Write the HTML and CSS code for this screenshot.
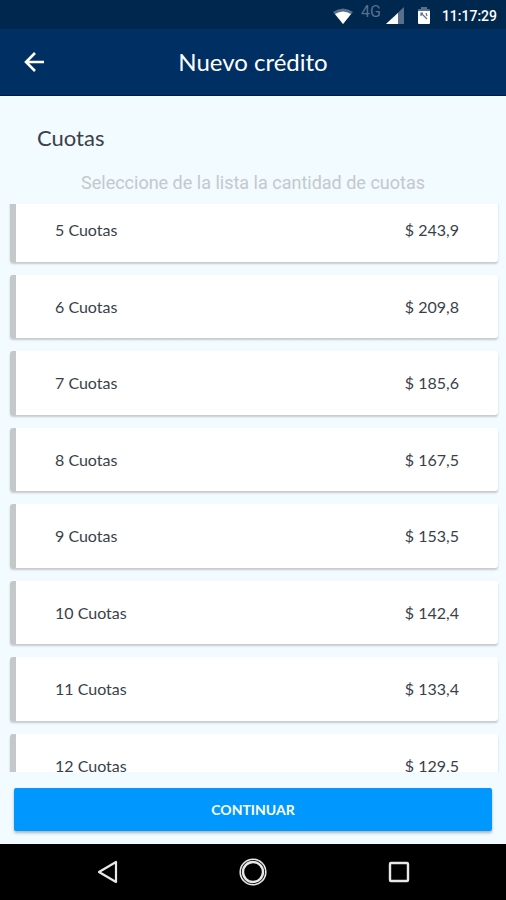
FILE: index.html
```html
<!doctype html>
<html lang="es">
    <head>
        <meta charset="utf-8" />
        <meta name="viewport" content="width=device-width" />
        <title>Nuevo crédito</title>
        <link rel="stylesheet" href="styles.css">
    </head>
    <body>
        <div class="status">
            <svg class="wifi" width="20" height="16" viewBox="0 0 20 16">
                <path d="M0 4Q10-3 20 4L10 16Z" fill="#58708c" />
                <path d="M2 6Q10 1 18 6L10 16Z" fill="#fff" />
            </svg>
            <span class="network">4G</span>
            <svg class="signal" width="18" height="17" viewBox="0 0 18 17">
                <path d="M18 0V17H0Z" fill="#58708c" />
                <path d="M12 6V17H0Z" fill="#fff" />
            </svg>
            <svg class="battery" width="12" height="17" viewBox="0 0 12 17">
                <path d="M0 5V3Q0 2 1 2H3V0H9V2H11Q12 2 12 3V5Z" fill="#58708c" />
                <path d="M0 4H12V16Q12 17 11 17H1Q0 17 0 16Z" fill="#fff" />
                <path d="M3 6L9 12M3 9V6H5M8 6L9 9" fill="none" stroke="#5b7390" stroke-width="1.2" />
            </svg>
            <span class="clock">11:17:29</span>
        </div>
        <header class="header">
            <button class="back" aria-label="Volver">
                <svg width="20" height="20" viewBox="0 0 20 20" fill="none" stroke="#fff" stroke-width="2.6">
                    <path d="M20 10H2M11 1L2 10L11 19" />
                </svg>
            </button>
            <h1>Nuevo crédito</h1>
        </header>
        <main class="main">
            <h2>Cuotas</h2>
            <p class="hint">Seleccione de la lista la cantidad de cuotas</p>
            <div class="list">
                <ul class="options">
                    <li><button class="option"><span>5 Cuotas</span><span>$ 243,9</span></button></li>
                    <li><button class="option"><span>6 Cuotas</span><span>$ 209,8</span></button></li>
                    <li><button class="option"><span>7 Cuotas</span><span>$ 185,6</span></button></li>
                    <li><button class="option"><span>8 Cuotas</span><span>$ 167,5</span></button></li>
                    <li><button class="option"><span>9 Cuotas</span><span>$ 153,5</span></button></li>
                    <li><button class="option"><span>10 Cuotas</span><span>$ 142,4</span></button></li>
                    <li><button class="option"><span>11 Cuotas</span><span>$ 133,4</span></button></li>
                    <li><button class="option"><span>12 Cuotas</span><span>$ 129,5</span></button></li>
                </ul>
            </div>
            <button class="continue">CONTINUAR</button>
        </main>
        <nav class="navbar">
            <button aria-label="Atrás">
                <svg width="28" height="28" viewBox="0 0 28 28" fill="none" stroke="#e8e8e8" stroke-width="2.2" stroke-linejoin="round">
                    <path d="M23 4V24L6 14Z" />
                </svg>
            </button>
            <button aria-label="Inicio">
                <svg width="28" height="28" viewBox="0 0 28 28" fill="none" stroke="#e8e8e8">
                    <circle cx="14" cy="14" r="12.8" stroke-width="1.6" />
                    <circle cx="14" cy="14" r="10" stroke-width="2.4" />
                </svg>
            </button>
            <button aria-label="Recientes">
                <svg width="28" height="28" viewBox="0 0 28 28" fill="none" stroke="#e8e8e8" stroke-width="2.4">
                    <rect x="5" y="5" width="18" height="18" rx="1" />
                </svg>
            </button>
        </nav>
    </body>
</html>
```

FILE: styles.css
```css
* {
    box-sizing: border-box;
}
body {
    display: flex;
    flex-direction: column;
    height: 100vh;
    margin: 0;
    background: #f2fbff;
    color: #3a3f4a;
    font-family: Lato, sans-serif;
}
button {
    padding: 0;
    border: 0;
    background: none;
    color: inherit;
    font: inherit;
    cursor: pointer;
}
svg {
    display: block;
}
.status {
    display: flex;
    align-items: center;
    justify-content: flex-end;
    height: 29px;
    padding: 2px 9px 0 0;
    background: #00274d;
    color: #fff;
    font-family: Roboto, sans-serif;
}
.network {
    margin: 0 5px 8px 8px;
    color: #58708c;
    font-size: 16px;
}
.battery {
    margin: 0 12px 0 14px;
}
.clock {
    font-size: 14px;
    font-weight: 500;
}
.header {
    display: grid;
    grid-template-columns: 48px 1fr 48px;
    align-items: center;
    height: 67px;
    padding: 0 10px;
    border-bottom: 1px solid #001a4d;
    background: #003063;
    color: #fff;
}
.back {
    display: grid;
    place-items: center;
    height: 48px;
}
h1 {
    margin: 0;
    font-size: 24px;
    font-weight: 400;
    line-height: 32px;
    text-align: center;
}
.main {
    display: flex;
    flex: 1;
    flex-direction: column;
    min-height: 0;
    padding-top: 26px;
}
h2 {
    margin: 0 37px;
    font-size: 22px;
    font-weight: 400;
    line-height: 32px;
}
.hint {
    margin: 17px 0 9px;
    color: #c3c9cc;
    font-family: Roboto, sans-serif;
    font-size: 18px;
    line-height: 24px;
    text-align: center;
}
/* the list is scrolled a little, first and last rows are cut */
.list {
    display: flex;
    flex: 1;
    min-height: 0;
    padding: 0 8px 0 10px;
    overflow: hidden;
}
.options {
    display: grid;
    flex: 1;
    grid-auto-rows: 1fr;
    gap: 13px;
    margin: -6px 0 -25px;
    padding: 0;
    list-style: none;
}
.option {
    display: flex;
    align-items: center;
    justify-content: space-between;
    width: 100%;
    height: 100%;
    padding: 0 39px;
    border-left: 6px solid #c5c8c8;
    border-radius: 3px;
    background: #fff;
    box-shadow: 0 2px 2px #c6cacc;
    font-size: 16px;
}
.continue {
    height: 43px;
    margin: 16px 14px 13px;
    border-radius: 2px;
    background: #0098ff;
    box-shadow: 0 2px 3px #aab4ba;
    color: #fff;
    font-size: 14px;
    font-weight: 700;
}
.navbar {
    display: flex;
    align-items: center;
    justify-content: center;
    gap: 118px;
    height: 56px;
    background: #000;
}
```
